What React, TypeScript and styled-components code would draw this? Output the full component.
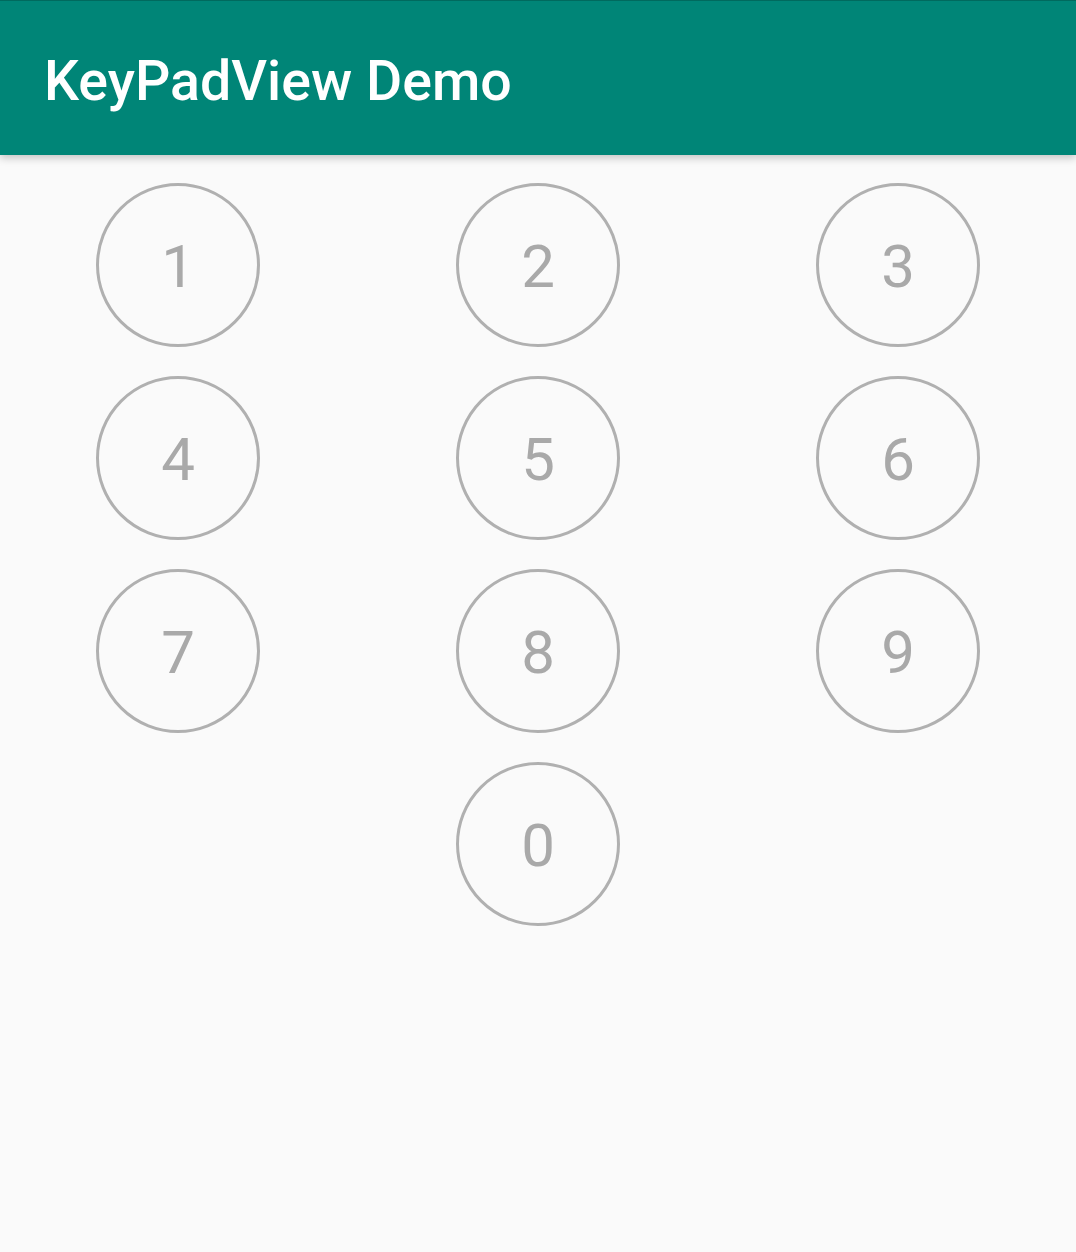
import React from "react";
import styled, { createGlobalStyle } from "styled-components";

const GlobalStyle = createGlobalStyle`
  html, body {
    margin: 0;
    padding: 0;
    background: #fafafa;
    font-family: Roboto, "Noto Sans", sans-serif;
  }
`;

const Screen = styled.div`
  min-height: 1252px;
  background: #fafafa;
  display: flex;
  flex-direction: column;
`;

const Toolbar = styled.header`
  height: 154px;
  background: #008577;
  border-top: 1px solid #006a5e;
  display: flex;
  align-items: center;
  padding-left: 44px;
  box-shadow: 0 3px 8px rgba(0, 0, 0, 0.22);
  position: relative;
  z-index: 1;
`;

const Title = styled.h1`
  margin: 0;
  color: #ffffff;
  font-family: Roboto, sans-serif;
  font-weight: 500;
  font-size: 55.5px;
  letter-spacing: 0;
  line-height: 1;
  padding-top: 8px;
`;

const Pad = styled.div`
  display: grid;
  grid-template-columns: repeat(3, 164px);
  justify-content: space-between;
  row-gap: 29px;
  padding: 28px 96px 0;
`;

const Key = styled.button<{ $col?: number }>`
  grid-column: ${(p) => (p.$col ? p.$col : "auto")};
  width: 164px;
  height: 164px;
  border-radius: 50%;
  border: 3px solid #b0b0b0;
  background: transparent;
  color: #a9a9a9;
  font-family: Roboto, sans-serif;
  font-size: 60px;
  font-weight: 400;
  line-height: 1;
  padding: 4px 0 0;
  display: flex;
  align-items: center;
  justify-content: center;
  cursor: pointer;
`;

const digits = ["1", "2", "3", "4", "5", "6", "7", "8", "9"];

export default function App() {
  return (
    <Screen>
      <GlobalStyle />
      <Toolbar>
        <Title>KeyPadView Demo</Title>
      </Toolbar>
      <Pad>
        {digits.map((d) => (
          <Key key={d}>{d}</Key>
        ))}
        <Key $col={2}>0</Key>
      </Pad>
    </Screen>
  );
}
